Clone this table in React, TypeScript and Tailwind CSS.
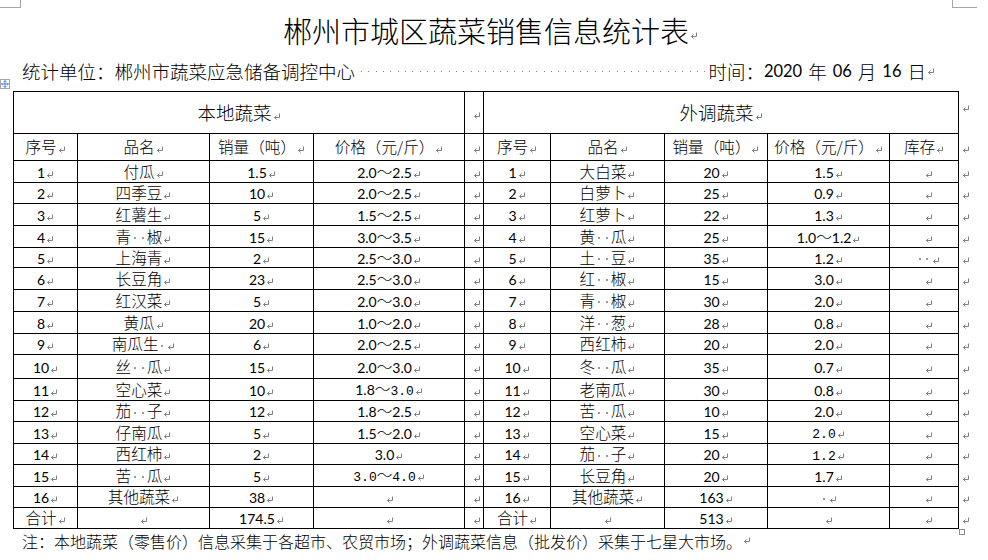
import { Move } from 'lucide-react'

// Word 段落标记
const Ret = ({ className = '' }: { className?: string }) => (
  <svg width="8" height="8" viewBox="0 0 8 8" className={`inline-block ml-px align-[-1px] ${className}`}>
    <path d="M6.5 0.5V4.5H1.5" stroke="#808080" fill="none" />
    <path d="M3.5 2.5L1.5 4.5L3.5 6.5" stroke="#808080" fill="none" />
  </svg>
)

// 空格标记
const Dot = () => (
  <span className="inline-block w-[0.5em] h-[2px] align-middle">
    <span className="block mx-auto w-[2px] h-[2px] bg-[#9a9a9a]" />
  </span>
)

const Name = ({ s }: { s: string }) => (
  <>
    {s.split('').map((c, i) => (c === '·' ? <Dot key={i} /> : <span key={i}>{c}</span>))}
  </>
)

const Num = ({ s }: { s: string }) => {
  if (s.startsWith('[')) {
    return <span className="font-['Liberation_Mono',monospace] font-normal text-[13px]">{s.slice(1, -1)}</span>
  }
  return <span className="font-[Lato,sans-serif] font-normal text-[14px]">{s}</span>
}

// "1.8～[3.0]" 方括号里是宋体数字
const Price = ({ s }: { s: string }) => {
  if (!s) return null
  const parts = s.split('～')
  return (
    <>
      {parts.map((p, i) => (
        <span key={i}>
          {i > 0 && <span>～</span>}
          <Num s={p} />
        </span>
      ))}
    </>
  )
}

type Row = { no: string; name: string; qty: string; price: string; stock?: string }

const local: Row[] = [
  { no: '1', name: '付瓜', qty: '1.5', price: '2.0～2.5' },
  { no: '2', name: '四季豆', qty: '10', price: '2.0～2.5' },
  { no: '3', name: '红薯生', qty: '5', price: '1.5～2.5' },
  { no: '4', name: '青··椒', qty: '15', price: '3.0～3.5' },
  { no: '5', name: '上海青', qty: '2', price: '2.5～3.0' },
  { no: '6', name: '长豆角', qty: '23', price: '2.5～3.0' },
  { no: '7', name: '红汉菜', qty: '5', price: '2.0～3.0' },
  { no: '8', name: '黄瓜', qty: '20', price: '1.0～2.0' },
  { no: '9', name: '南瓜生·', qty: '6', price: '2.0～2.5' },
  { no: '10', name: '丝··瓜', qty: '15', price: '2.0～3.0' },
  { no: '11', name: '空心菜', qty: '10', price: '1.8～[3.0]' },
  { no: '12', name: '茄··子', qty: '12', price: '1.8～2.5' },
  { no: '13', name: '仔南瓜', qty: '5', price: '1.5～2.0' },
  { no: '14', name: '西红柿', qty: '2', price: '3.0' },
  { no: '15', name: '苦··瓜', qty: '5', price: '[3.0]～[4.0]' },
  { no: '16', name: '其他蔬菜', qty: '38', price: '' },
  { no: '合计', name: '', qty: '174.5', price: '' },
]

const outside: Row[] = [
  { no: '1', name: '大白菜', qty: '20', price: '1.5' },
  { no: '2', name: '白萝卜', qty: '25', price: '0.9' },
  { no: '3', name: '红萝卜', qty: '22', price: '1.3' },
  { no: '4', name: '黄··瓜', qty: '25', price: '1.0～1.2' },
  { no: '5', name: '土··豆', qty: '35', price: '1.2', stock: '··' },
  { no: '6', name: '红··椒', qty: '15', price: '3.0' },
  { no: '7', name: '青··椒', qty: '30', price: '2.0' },
  { no: '8', name: '洋··葱', qty: '28', price: '0.8' },
  { no: '9', name: '西红柿', qty: '20', price: '2.0' },
  { no: '10', name: '冬··瓜', qty: '35', price: '0.7' },
  { no: '11', name: '老南瓜', qty: '30', price: '0.8' },
  { no: '12', name: '苦··瓜', qty: '10', price: '2.0' },
  { no: '13', name: '空心菜', qty: '15', price: '[2.0]' },
  { no: '14', name: '茄··子', qty: '20', price: '[1.2]' },
  { no: '15', name: '长豆角', qty: '20', price: '1.7' },
  { no: '16', name: '其他蔬菜', qty: '163', price: '·' },
  { no: '合计', name: '', qty: '513', price: '' },
]

const heights = [
  'h-[22px]', 'h-[21px]', 'h-[22px]', 'h-[22px]', 'h-[20px]', 'h-[22px]', 'h-[22px]', 'h-[22px]', 'h-[21px]',
  'h-[24px]', 'h-[22px]', 'h-[21px]', 'h-[22px]', 'h-[21px]', 'h-[22px]', 'h-[21px]', 'h-[21px]',
]

const td = 'border border-black p-0 text-center align-middle whitespace-nowrap'
const NoCell = ({ s }: { s: string }) => (s === '合计' ? <span>合计</span> : <Num s={s} />)

export default function App() {
  return (
    <div className="relative w-[988px] h-[560px] overflow-hidden bg-white text-black font-light font-['Noto_Sans_CJK_SC',sans-serif]">
      {/* 页面角标 */}
      <div className="absolute left-0 top-0 w-[21px] h-[8px] border-r border-b border-[#a6a6a6]" />
      <div className="absolute left-[952px] top-0 w-[25px] h-[8px] border-l border-b border-[#a6a6a6]" />

      <div className="h-[60px] flex items-center pl-[283px] text-[29px] leading-none">
        郴州市城区蔬菜销售信息统计表
        <Ret className="self-end mb-[20px] ml-[2px]" />
      </div>

      <div className="h-[23px] flex items-center pl-[22px] pr-[53px] text-[18.5px] leading-none">
        <span>统计单位：郴州市蔬菜应急储备调控中心</span>
        <div className="flex-1 flex items-center overflow-hidden pl-[3px]">
          {Array.from({ length: 48 }).map((_, i) => (
            <span key={i} className="w-[7.3px] shrink-0 flex justify-center">
              <span className="w-px h-px bg-[#808080]" />
            </span>
          ))}
        </div>
        <span>时间：</span>
        <span className="font-[Lato,sans-serif] font-normal text-[16.5px]">2020</span>
        <span className="ml-[6px]">年</span>
        <span className="ml-[6px] font-[Lato,sans-serif] font-normal text-[16.5px]">06</span>
        <span className="ml-[6px]">月</span>
        <span className="ml-[6px] font-[Lato,sans-serif] font-normal text-[16.5px]">16</span>
        <span className="ml-[6px]">日</span>
        <Ret className="ml-[3px]" />
      </div>

      <div className="relative mt-[8px]">
        <div className="absolute left-0 top-[-12px] w-[10px] h-[10px] border border-[#a6a6a6] bg-white flex items-center justify-center">
          <Move size={8} strokeWidth={2.5} color="#2f6fd6" />
        </div>
        <table className="table-fixed border-collapse ml-[13px] text-[15.6px] leading-none">
          <colgroup>
            <col className="w-[64px]" />
            <col className="w-[132px]" />
            <col className="w-[104px]" />
            <col className="w-[151px]" />
            <col className="w-[19px]" />
            <col className="w-[67px]" />
            <col className="w-[114px]" />
            <col className="w-[103px]" />
            <col className="w-[122px]" />
            <col className="w-[69px]" />
            <col className="w-[20px]" />
          </colgroup>
          <tbody>
            <tr className="h-[42px]">
              <td colSpan={4} className={`${td} text-[18.5px]`}>
                本地蔬菜<Ret />
              </td>
              <td className={`${td} pl-[4px]`}><Ret /></td>
              <td colSpan={5} className={`${td} text-[18.5px]`}>
                外调蔬菜<Ret />
              </td>
              <td className="p-0 pl-[2px] align-top pt-[6px]"><Ret /></td>
            </tr>
            <tr className="h-[27px]">
              <td className={td}>序号<Ret /></td>
              <td className={td}>品名<Ret /></td>
              <td className={td}>销量（吨）<Ret /></td>
              <td className={td}>价格（元/斤）<Ret /></td>
              <td className={`${td} pl-[4px]`}><Ret /></td>
              <td className={td}>序号<Ret /></td>
              <td className={td}>品名<Ret /></td>
              <td className={td}>销量（吨）<Ret /></td>
              <td className={td}>价格（元/斤）<Ret /></td>
              <td className={td}>库存<Ret /></td>
              <td className="p-0 pl-[2px]"><Ret /></td>
            </tr>
            {local.map((l, i) => {
              const r = outside[i]
              return (
                <tr key={i} className={heights[i]}>
                  <td className={td}><NoCell s={l.no} /><Ret /></td>
                  <td className={td}><Name s={l.name} /><Ret /></td>
                  <td className={td}><Num s={l.qty} /><Ret /></td>
                  <td className={td}><Price s={l.price} /><Ret /></td>
                  <td className={`${td} pl-[4px]`}><Ret /></td>
                  <td className={td}><NoCell s={r.no} /><Ret /></td>
                  <td className={td}><Name s={r.name} /><Ret /></td>
                  <td className={td}><Num s={r.qty} /><Ret /></td>
                  <td className={td}>
                    {r.price === '·' ? <Dot /> : <Price s={r.price} />}
                    <Ret />
                  </td>
                  <td className={`${td} pl-[8px]`}>
                    {r.stock && <Name s={r.stock} />}
                    <Ret />
                  </td>
                  <td className="p-0 pl-[2px] relative">
                    <Ret />
                    {i === local.length - 1 && (
                      <span className="absolute left-[0px] bottom-[-6px] w-[6px] h-[6px] border border-[#8c8c8c] bg-white" />
                    )}
                  </td>
                </tr>
              )
            })}
          </tbody>
        </table>
      </div>

      <div className="h-[24px] flex items-center pl-[22px] text-[16px] leading-none">
        注：本地蔬菜（零售价）信息采集于各超市、农贸市场；外调蔬菜信息（批发价）采集于七星大市场。
        <Ret className="ml-[3px]" />
      </div>
    </div>
  )
}
